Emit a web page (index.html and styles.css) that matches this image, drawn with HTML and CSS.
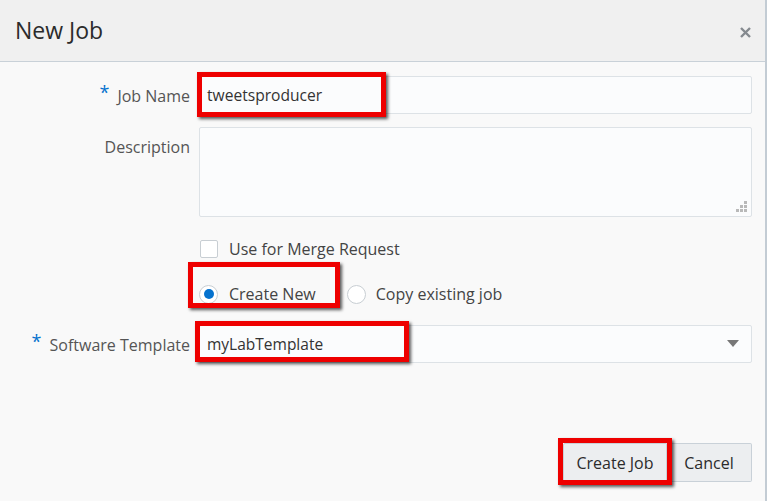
FILE: index.html
```html
<!DOCTYPE html>
<html>
<head>
<meta charset="utf-8">
<link rel="stylesheet" href="styles.css">
</head>
<body>
<div class="dialog">
  <div class="header">
    <div class="title">New Job</div>
    <svg class="close" width="11" height="11" viewBox="0 0 11 11"><path d="M1 1L10 10M10 1L1 10"/></svg>
  </div>
  <div class="form">
    <div class="row row-name">
      <label class="label"><span class="req">*</span>Job Name</label>
      <div class="input">tweetsproducer</div>
    </div>
    <div class="row row-desc">
      <label class="label label-top">Description</label>
      <div class="textarea">
        <svg class="grip" width="12" height="12" viewBox="0 0 12 12"><rect x="8" y="0" width="3" height="3"/><rect x="4" y="4" width="3" height="3"/><rect x="8" y="4" width="3" height="3"/><rect x="0" y="8" width="3" height="3"/><rect x="4" y="8" width="3" height="3"/><rect x="8" y="8" width="3" height="3"/></svg>
      </div>
    </div>
    <div class="row row-check">
      <div></div>
      <div class="opt"><span class="checkbox"></span><span>Use for Merge Request</span></div>
    </div>
    <div class="row row-radio">
      <div></div>
      <div class="radios">
        <div class="opt"><span class="radio on"></span><span>Create New</span></div>
        <div class="opt opt2"><span class="radio"></span><span>Copy existing job</span></div>
      </div>
    </div>
    <div class="row row-select">
      <label class="label"><span class="req">*</span>Software Template</label>
      <div class="select">
        <span>myLabTemplate</span>
        <svg class="caret" width="12" height="8" viewBox="0 0 12 8"><path d="M0 0H12L6 7Z"/></svg>
      </div>
    </div>
  </div>
  <div class="footer">
    <div class="btn btn-create">Create Job</div>
    <div class="btn btn-cancel">Cancel</div>
  </div>
  <div class="mark mark-name"></div>
  <div class="mark mark-radio"></div>
  <div class="mark mark-select"></div>
  <div class="mark mark-create"></div>
</div>
</body>
</html>
```

FILE: styles.css
```css
html, body {
  margin: 0;
  padding: 0;
  background: #f9f9f9;
}
body {
  font-family: "Open Sans", "Noto Sans", sans-serif;
  font-size: 16px;
  color: #333;
}
.dialog {
  position: relative;
  width: 765px;
  height: 501px;
  border-right: 2px solid #c3ccd4;
  background: #f9f9f9;
  overflow: hidden;
}
.header {
  height: 61px;
  background: #f0f0f0;
  border-bottom: 1px solid #c9d1d8;
  display: flex;
  align-items: center;
  justify-content: space-between;
  padding: 0 14px 0 15px;
}
.title {
  font-size: 23px;
  color: #2b2b2b;
  margin-top: -2px;
}
.close {
  stroke: #858a8f;
  stroke-width: 2.4;
  fill: none;
  margin-top: 4px;
}
.form {
  padding: 14px 13px 0 0;
  display: flex;
  flex-direction: column;
}
.row {
  display: grid;
  grid-template-columns: 190px 1fr;
  column-gap: 9px;
  align-items: center;
}
.label {
  text-align: right;
  color: #555;
}
.label-top {
  align-self: start;
  padding-top: 9px;
}
.req {
  color: #0572ce;
  font-size: 18px;
  margin-right: 8px;
  position: relative;
  top: -3px;
}
.input, .textarea, .select {
  background: #fbfcfd;
  border: 1px solid #dde2e6;
  border-radius: 2px;
  box-sizing: border-box;
}
.input {
  height: 38px;
  display: flex;
  align-items: center;
  padding-left: 7px;
  font-size: 15.6px;
}
.row-desc {
  margin-top: 13px;
}
.textarea {
  height: 90px;
  position: relative;
}
.grip {
  position: absolute;
  right: 3px;
  bottom: 3px;
  fill: #b9b9b9;
}
.row-check {
  margin-top: 21px;
  height: 18px;
}
.opt {
  display: flex;
  align-items: center;
  gap: 11px;
  color: #444;
}
.checkbox {
  width: 16px;
  height: 16px;
  border: 1px solid #c8ced3;
  border-radius: 2px;
  background: #fff;
  margin-left: 1px;
}
.row-radio {
  margin-top: 27px;
  height: 18px;
}
.radios {
  display: flex;
  align-items: center;
}
.opt2 {
  margin-left: 31px;
  gap: 10px;
}
.radio {
  width: 19px;
  height: 19px;
  box-sizing: border-box;
  border: 1px solid #c8ced3;
  border-radius: 50%;
  background: #fff;
  display: flex;
  align-items: center;
  justify-content: center;
}
.radio.on::after {
  content: "";
  width: 10px;
  height: 10px;
  border-radius: 50%;
  background: #0572ce;
}
.row-select {
  margin-top: 24px;
}
.select {
  height: 38px;
  display: flex;
  align-items: center;
  justify-content: space-between;
  padding: 0 12px 0 7px;
  font-size: 15.5px;
}
.caret {
  fill: #777;
}
.footer {
  display: flex;
  justify-content: flex-end;
  padding-right: 13px;
  margin-top: 80px;
}
.btn {
  height: 39px;
  box-sizing: border-box;
  border: 1px solid #c9d1d8;
  background: #eceef0;
  display: flex;
  align-items: center;
  justify-content: center;
  color: #2b2b2b;
}
.btn-create {
  width: 104px;
  border-radius: 2px 0 0 2px;
}
.btn-cancel {
  width: 85px;
  border-left: none;
  border-radius: 0 2px 2px 0;
}
.mark {
  position: absolute;
  border: 5px solid #ee0000;
  box-sizing: border-box;
  box-shadow: 2px 2px 3px rgba(0, 0, 0, 0.65);
}
.mark-name {
  left: 197px;
  top: 72px;
  width: 189px;
  height: 45px;
}
.mark-radio {
  left: 188px;
  top: 262px;
  width: 152px;
  height: 46px;
}
.mark-select {
  left: 195px;
  top: 321px;
  width: 214px;
  height: 41px;
}
.mark-create {
  left: 558px;
  top: 438px;
  width: 114px;
  height: 47px;
}
```
